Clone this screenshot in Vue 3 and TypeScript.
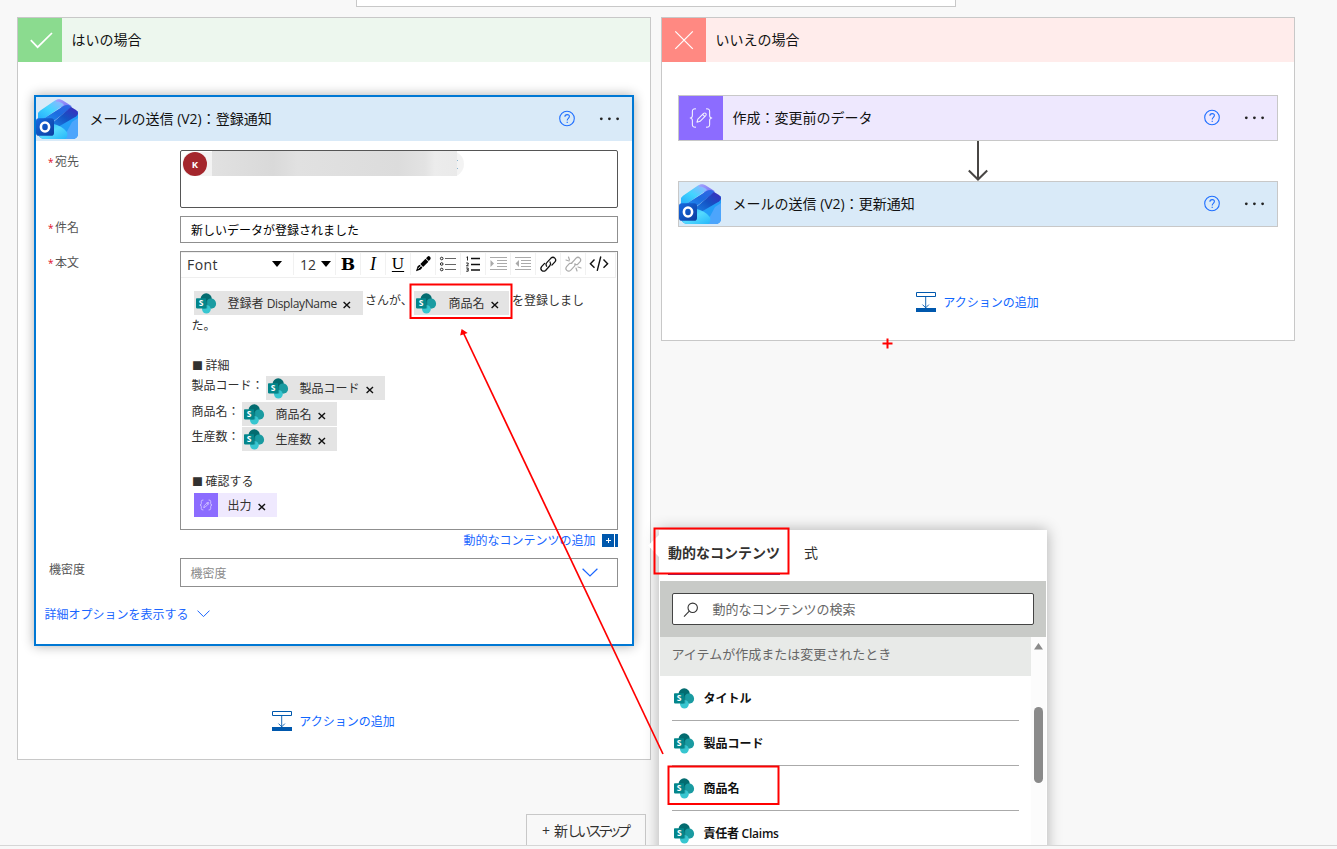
<script setup lang="ts">
import { defineComponent, h } from 'vue'

interface BodyToken { label: string; kind: 'sp' | 'compose' }
interface BodyLine { cls: string; square?: boolean; text?: string; token?: BodyToken }

const bodyLines: BodyLine[] = [
  { cls: 'plain after', text: 'た。' },
  { cls: 'plain', square: true, text: '詳細' },
  { cls: 'row1', text: '製品コード：', token: { label: '製品コード', kind: 'sp' } },
  { cls: 'row2', text: '商品名：', token: { label: '商品名', kind: 'sp' } },
  { cls: 'row3', text: '生産数：', token: { label: '生産数', kind: 'sp' } },
  { cls: 'plain', square: true, text: '確認する' },
  { cls: 'row4', token: { label: '出力', kind: 'compose' } },
]

const dynamicItems: string[] = ['タイトル', '製品コード', '商品名', '責任者 Claims']

const SpIcon = defineComponent({
  render: () => h('svg', { width: 21, height: 21, viewBox: '0 0 21 21' }, [
    h('circle', { cx: 10.2, cy: 5.9, r: 5.6, fill: '#036c70' }),
    h('circle', { cx: 15, cy: 10.7, r: 5.1, fill: '#1a9ba1' }),
    h('circle', { cx: 10.4, cy: 16.2, r: 4.3, fill: '#37c6d0' }),
    h('path', { d: 'M6 15.5h5.2V6H6z', fill: '#025558', opacity: 0.4 }),
    h('rect', { x: 0, y: 5.2, width: 10.2, height: 10.2, rx: 0.8, fill: '#03868b' }),
    h('text', { x: 5.1, y: 13.2, 'text-anchor': 'middle', 'font-size': 8.5, 'font-weight': 700, 'font-family': 'Open Sans, sans-serif', fill: '#fff' }, 'S'),
  ]),
})

const ComposeIcon = defineComponent({
  props: { size: { type: Number, default: 24 } },
  render() {
    return h('svg', { width: this.size, height: this.size, viewBox: '0 0 24 24', fill: 'none', stroke: '#fff', 'stroke-width': 0.6, 'stroke-linecap': 'round', 'stroke-linejoin': 'round', opacity: 0.9 }, [
      h('path', { d: 'M9 7Q7.3 6.9 7.3 8.3v2.3q0 1.3-1.2 1.4 1.2.1 1.2 1.4v2.3q0 1.4 1.7 1.3' }),
      h('path', { d: 'M15 7q1.7-.1 1.7 1.3v2.3q0 1.3 1.2 1.4-1.2.1-1.2 1.4v2.3q0 1.4-1.7 1.3' }),
      h('path', { d: 'M9.8 14.3l.5-1.7 3.1-3.1q.7-.5 1.2 0t0 1.2l-3.1 3.1zM12.9 10l1.2 1.2' }),
    ])
  },
})

const OutlookIcon = defineComponent({
  props: { uid: { type: String, required: true } },
  render() {
    const g = (n: string, a: number[], stops: string[]) =>
      h('linearGradient', { id: this.uid + n, x1: a[0], y1: a[1], x2: a[2], y2: a[3] },
        stops.map((c, i) => h('stop', { offset: i / (stops.length - 1), 'stop-color': c })))
    const f = (n: string) => `url(#${this.uid}${n})`
    return h('svg', { width: 43, height: 43, viewBox: '0 0 43 43' }, [
      h('defs', [
        g('a', [0, 0, 1, 1], ['#38c8ff', '#1795f4', '#5a9cff']),
        g('b', [0, 1, 1, 0], ['#25aefb', '#42d5ff', '#9ab2ff']),
        g('c', [0, 0, 1, 1], ['#a8a4ff', '#6a67f0']),
        g('d', [0, 1, 1, 0], ['#1b82e8', '#1453c4', '#4128bd']),
        g('e', [0, 1, 1, 0], ['#1f8ff0', '#1c6ce0', '#3464e4']),
        g('f', [0, 0, 1, 1], ['#15a6fa', '#55dafe', '#25b7fa']),
        g('g', [0, 0, 1, 1], ['#1769e0', '#0b3d9e']),
      ]),
      h('path', { d: 'M2 15L22 28 42 13V35q0 6-6 6H9q-7 0-7-7z', fill: f('a') }),
      h('path', { d: 'M17 28L42 14V35q0 6-6 6H18z', fill: '#229df7' }),
      h('path', { d: 'M36 24L42 20V35q0 6-6 6H27z', fill: '#64a9ff', opacity: 0.65 }),
      h('path', { d: 'M2 21V17q0-3 2-4.3L19 2.5Q22 .5 25.5 2.2L28 5 7 20.5z', fill: f('b') }),
      h('path', { d: 'M20 2.2q3-2 6.5 0L35.5 8 27 12q-2-4-7.5-4.5z', fill: f('c') }),
      h('path', { d: 'M2 15L19.5 3.5Q25 3 28 7L8 20.5 2 21z', fill: f('b') }),
      h('path', { d: 'M7 21L27.5 8q3.8-2 7.2.2L36 9 16 24.5z', fill: f('e') }),
      h('path', { d: 'M15 26l20-17 5 3q2 1.3 2 3.3t-2 3.2L22 29z', fill: f('d') }),
      h('path', { d: 'M12 25q10 1 16 6t1.5 10H9q-6 0-7-6z', fill: f('f') }),
      h('rect', { x: 0, y: 20.3, width: 18, height: 17.4, rx: 2.8, fill: f('g') }),
      h('ellipse', { cx: 9, cy: 29, rx: 4.1, ry: 4.5, fill: 'none', stroke: '#fff', 'stroke-width': 2.6 }),
    ])
  },
})

const HelpDots = defineComponent({
  render: () => h('svg', { width: 62, height: 18, viewBox: '0 0 62 18' }, [
    h('circle', { cx: 8, cy: 8.5, r: 7.3, fill: 'none', stroke: '#1f6fff', 'stroke-width': 1.1 }),
    h('path', { d: 'M5.9 6.8q0-2.2 2.3-2.2t2.2 2c0 1.7-2.2 1.8-2.2 3.8M8.2 11.7v1.3', fill: 'none', stroke: '#1f6fff', 'stroke-width': 1.1 }),
    ...[42.3, 50.4, 58.6].map(cx => h('circle', { cx, cy: 8.8, r: 1.4, fill: '#222' })),
  ]),
})

const AddIcon = defineComponent({
  render: () => h('svg', { width: 20, height: 20, viewBox: '0 0 20 20', fill: 'none', stroke: '#0058ad' }, [
    h('path', { d: 'M.5.5h19v4H.5z' }),
    h('path', { d: 'M9.7 5v11M6.5 12.6l3.2 3.2 3.2-3.2', 'stroke-width': 0.9 }),
    h('path', { d: 'M0 16h20v4H0z', fill: '#0058ad', stroke: 'none' }),
  ]),
})

const CrossIcon = defineComponent({
  render: () => h('svg', { width: 8, height: 8, viewBox: '0 0 8 8' }, [
    h('path', { d: 'M.6 1.1l6.4 6m0-6l-6.4 6', stroke: '#111', 'stroke-width': 1.4 }),
  ]),
})
</script>

<template>
  <div class="app">
    <div class="parent-box"></div>
    <div class="branches">
      <section class="branch yes">
        <header class="branch-head">
          <div class="branch-icon">
            <svg width="44" height="44" fill="none" stroke="#fff" stroke-width="1.7"><path d="M12.8 22.2l6.8 7L34 15" /></svg>
          </div>
          <span>はいの場合</span>
        </header>

        <article class="card selected">
          <header class="card-head">
            <div class="mail-icon"><OutlookIcon uid="m1" /></div>
            <span class="card-title">メールの送信 (V2)：登録通知</span>
            <HelpDots class="help" />
          </header>
          <div class="form">
            <label class="lab"><i>*</i>宛先</label>
            <div class="to-box">
              <div class="person">
                <span class="avatar">K</span>
                <span class="hidden-name"></span>
                <span class="sliver"></span>
              </div>
            </div>
            <label class="lab"><i>*</i>件名</label>
            <div class="subject">新しいデータが登録されました</div>
            <label class="lab"><i>*</i>本文</label>
            <div class="editor">
              <div class="toolbar">
                <div class="tool font"><span>Font</span><svg width="10" height="6"><path d="M0 0h10L5 6z" /></svg></div>
                <div class="tool size"><span>12</span><svg width="10" height="6"><path d="M0 0h10L5 6z" /></svg></div>
                <div class="tool bold">B</div>
                <div class="tool ital">I</div>
                <div class="tool under">U</div>
                <div class="tool"><svg width="18" height="18"><path d="M2 16.3l1.6-5 2-1.6 2.8 2.8-1.6 2zM6.3 9l5.2-5.2 2.9 2.9-5.3 5.2zM12 3.2l1.7-1.8q1-.8 2.3.3 1.3 1.4.4 2.5L14.8 6z" /><path d="M4 13.8l2.6-2.6" stroke="#fff" stroke-width="1" /></svg></div>
                <div class="tool"><svg width="18" height="18" fill="none" stroke="#222"><circle cx="2.7" cy="3.5" r="1.3" /><circle cx="2.7" cy="9" r="1.3" /><circle cx="2.7" cy="14.5" r="1.3" /><path d="M6 3.5h11M6 9.5h11M6 14.5h11" stroke="#666" /></svg></div>
                <div class="tool"><svg width="18" height="18" fill="none" stroke="#111"><path d="M7 3.5h9M7 9.5h9M7 15h9" stroke-width="1.5" /><path d="M3.5 1.5v4M2.5 2.3h1M2.2 8h2v1.4l-1.8 1.4h2.2M2.2 13h2v3.2h-2m.6-1.6h1" stroke-width=".9" /></svg></div>
                <div class="tool"><svg width="18" height="18" fill="none" stroke="#aaa"><path d="M1 2.5h17M8 5.5h10M8 8.5h10M8 11.5h10M1 14.5h17" /><path d="M1.5 5L5 8.4 1.5 12z" fill="#aaa" stroke="none" /></svg></div>
                <div class="tool"><svg width="18" height="18" fill="none" stroke="#aaa"><path d="M1 2.5h16M7 5.5h10M7 8.5h10M7 11.5h10M1 14.5h16" /><path d="M5 5L1.5 8.4 5 12z" fill="#aaa" stroke="none" /></svg></div>
                <div class="tool"><svg width="18" height="18" fill="none" stroke="#111" stroke-width="1.3" stroke-linecap="round"><path d="M7.6 11.2q-1.3-2.1.2-3.6l4.2-4.5q2-1.7 3.8 0t.1 3.8l-3 3.2" /><path d="M11 7q1.4 2-.2 3.8L6.6 15.4q-2 1.6-3.8 0t-.2-3.8l3-3.2" /></svg></div>
                <div class="tool"><svg width="18" height="18" fill="none" stroke="#aaa" stroke-width="1.2" stroke-linecap="round"><path d="M7.6 8q3-3 4.4-4.9 2-1.7 3.8 0t.1 3.8l-2.6 2.7h-2.5M11 8.5l-.2 2.3L6.6 15.4q-2 1.6-3.8 0t-.2-3.8l3-3.2h2.2M4.5 2l1 3M2 5l3 1M12 13l1 3M14 12l3 1" /></svg></div>
                <div class="tool last"><svg width="20" height="18" fill="none" stroke="#111" stroke-width="1.4"><path d="M5.5 4.5L1.4 8.7l4.1 4M14.5 4.5l4.1 4.2-4.1 4M11.8 1.5L8.2 15.8" /></svg></div>
              </div>
              <div class="content">
                <div class="line first">
                  <span class="token lead"><SpIcon class="sp" /><b>登録者 <span class="latin">DisplayName</span></b><CrossIcon class="x" /></span>
                  <span class="said">さんが、</span>
                  <span class="token marked"><SpIcon class="sp" /><b>商品名</b><CrossIcon class="x" /></span>
                  <span class="tail">を登録しまし</span>
                </div>
                <div v-for="(line, i) in bodyLines" :key="i" class="line" :class="line.cls">
                  <span v-if="line.square" class="square">■</span>
                  <span v-if="line.text" class="txt">{{ line.text }}</span>
                  <span v-if="line.token" class="token" :class="line.token.kind">
                    <SpIcon v-if="line.token.kind === 'sp'" class="sp" />
                    <span v-else class="compose-box"><ComposeIcon :size="24" /></span>
                    <b>{{ line.token.label }}</b><CrossIcon class="x" />
                  </span>
                </div>
              </div>
            </div>
            <div class="dynamic-link">
              <span>動的なコンテンツの追加</span>
              <svg width="16" height="13"><path d="M0 0h12v13H0zM13 0h3v13h-3z" fill="#0058ad" /><path d="M4 6.5h5M6.5 4v5" stroke="#fff" /></svg>
            </div>
            <label class="lab level">機密度</label>
            <div class="select"><span>機密度</span><svg width="16" height="9" fill="none" stroke="#1a66ff" stroke-width="1.2"><path d="M.6.7L8 8 15.4.7" /></svg></div>
          </div>
          <div class="advanced"><span>詳細オプションを表示する</span><svg width="13" height="8" fill="none" stroke="#1a66ff"><path d="M.5.6l6 6 6-6" /></svg></div>
        </article>
        <div class="add-action"><AddIcon /><span>アクションの追加</span></div>
      </section>

      <section class="branch no">
        <header class="branch-head">
          <div class="branch-icon">
            <svg width="44" height="44" fill="none" stroke="#fff" stroke-width="1.2"><path d="M13.3 13.3l17.5 17.5m0-17.5L13.3 30.8" /></svg>
          </div>
          <span>いいえの場合</span>
        </header>
        <article class="card small compose-card">
          <div class="compose-icon"><ComposeIcon :size="44" /></div>
          <span class="card-title">作成：変更前のデータ</span>
          <HelpDots class="help" />
        </article>
        <svg class="arrow" width="22" height="40" fill="none" stroke="#484644" stroke-width="2"><path d="M11 0v38M1.8 29.5l9.2 9 9.2-9" /></svg>
        <article class="card small">
          <div class="mail-icon"><OutlookIcon uid="m2" /></div>
          <span class="card-title">メールの送信 (V2)：更新通知</span>
          <HelpDots class="help" />
        </article>
        <div class="add-action"><AddIcon /><span>アクションの追加</span></div>
      </section>
    </div>

    <button class="new-step"><span>+</span><span class="kanji">新</span><span class="kana">しいステップ</span></button>

    <div class="popup-clip">
      <aside class="popup">
        <svg class="tip" width="11" height="22"><path d="M11 0L0 10.5 11 22z" fill="#fff" /></svg>
        <nav class="tabs"><span class="tab active">動的なコンテンツ</span><span class="tab">式</span></nav>
        <div class="search-area">
          <div class="search">
            <svg width="16" height="16" fill="none" stroke="#333" stroke-width="1.1"><circle cx="9.7" cy="6.8" r="4.7" /><path d="M6.3 10.2L1 15.6" /></svg>
            <span>動的なコンテンツの検索</span>
          </div>
        </div>
        <div class="list-wrap">
          <div class="list">
            <div class="group">アイテムが作成または変更されたとき</div>
            <div v-for="item in dynamicItems" :key="item" class="item"><SpIcon /><span>{{ item }}</span></div>
          </div>
          <div class="scroll">
            <svg width="9" height="7"><path d="M4.5 0L9 6.5H0z" fill="#8a8a8a" /></svg>
            <div class="thumb"></div>
          </div>
        </div>
      </aside>
    </div>
    <div class="bottom-line"></div>

    <svg class="marks" width="1337" height="849" fill="none" stroke="#f00" stroke-width="2">
      <rect x="410.5" y="284.5" width="101" height="33.5" />
      <rect x="654.5" y="528.5" width="134" height="45" />
      <rect x="668.5" y="766.5" width="110" height="37.5" />
      <path d="M663 754L463 332" stroke-width="1.7" />
      <path d="M461 334.5L462 330l4.3 2.8z" fill="#f00" stroke-width="1.2" />
      <path d="M882.5 343.5h10M887.5 338.5v10" />
    </svg>
  </div>
</template>

<style>
html, body { margin: 0; background: #f8f8f8; overflow: hidden; }
</style>

<style scoped>
.app { position: relative; width: 1337px; height: 849px; overflow: hidden; background: #f8f8f8; font-family: "Open Sans", "Noto Sans CJK JP", sans-serif; font-size: 12px; color: #323130; }
.app * { box-sizing: border-box; }
svg { display: block; flex: none; }
span, label { white-space: nowrap; }
.parent-box { width: 600px; height: 7px; margin-left: 356px; background: #fff; border: 1px solid #c8c8c8; border-top: 0; }
.branches { display: flex; align-items: flex-start; gap: 10px; padding: 10px 0 0 17px; }
.branch { width: 634px; height: 743px; background: #fff; border: 1px solid #c8c8c8; display: flex; flex-direction: column; align-items: center; }
.branch.no { height: 324px; }
.branch-head { display: flex; width: 100%; height: 44px; flex: none; align-items: center; gap: 9.5px; background: #edf7ee; color: #111; font-size: 14px; line-height: 20px; margin-bottom: 33px; }
.no .branch-head { background: #ffeceb; }
.branch-icon { width: 44px; height: 44px; background: #8bdb8f; }
.no .branch-icon { background: #ff8982; }
.card { width: 600px; flex: none; background: #fff; }
.selected { height: 551px; border: 2px solid #0078d4; box-shadow: 0 0 11px rgba(0, 0, 0, .32); }
.card-head { display: flex; align-items: center; height: 44px; background: #d9eaf8; }
.mail-icon { width: 44px; height: 44px; padding-top: 1px; }
.card-title { margin-left: 9.5px; color: #111; font-size: 14px; line-height: 20px; flex: 1; }
.help { margin-right: 11px; }
.small { display: flex; align-items: center; height: 46px; border: 1px solid #c8c8c8; background: #d9eaf8; }
.compose-card { background: #eee8fe; }
.compose-icon { width: 44px; height: 44px; background: #8c6cff; }
.form { display: grid; grid-template-columns: 132px 438px; grid-template-rows: 58px 27px 279px 12px 29px; row-gap: 8px; padding: 9px 0 0 12px; align-items: start; }
.lab { height: 24px; line-height: 24px; color: #555; }
.lab.level { padding-left: 1px; }
.lab i { color: #e00b1c; font-style: normal; font-size: 10px; display: inline-block; width: 7px; }
.to-box { height: 58px; border: 1px solid #555; border-radius: 2px; padding: 0 0 0 1px; }
.person { display: flex; align-items: center; width: 282px; height: 26px; background: linear-gradient(#f3f3f3, #f3f3f3) 0 1px / 100% 24px no-repeat; border-radius: 13px; }
.avatar { width: 24px; height: 24px; margin-left: 1px; border-radius: 50%; background: #a4262c; color: #fff; font-size: 9.5px; font-weight: 700; line-height: 25px; text-align: center; }
.hidden-name { width: 245px; height: 25px; align-self: flex-start; margin-left: 5px; background: linear-gradient(90deg, #e1e1e1, #d9d9d9 25%, #e1e1e1 35%, #dcdcdc 76%, #e3e3e3 87%, #ececec 91%, #eaeaea); }
.sliver { width: 1px; height: 9px; border-top: 1.5px solid #8bb4cf; border-bottom: 1.5px solid #8bb4cf; }
.subject { height: 27px; border: 1px solid #8f8f8f; padding-left: 10px; line-height: 27px; color: #000; }
.editor { height: 279px; border: 1px solid #8f8f8f; }
.toolbar { display: flex; height: 26px; border: 1px solid #efefef; border-width: 1px 1px 1px 0; margin-right: 1px; }
.tool { display: flex; align-items: center; justify-content: center; width: 25px; height: 22px; border: 1px solid #f1f1f1; border-width: 0 1px 0 0; flex: none; color: #000; }
.tool.last { border: 0; }
.tool.font { width: 113px; justify-content: flex-start; padding-left: 6px; font-size: 14px; letter-spacing: .4px; color: #333; }
.tool.font span { width: 85px; }
.tool.size { width: 42px; justify-content: flex-start; padding-left: 6px; font-size: 14px; gap: 5px; color: #333; }
.bold, .ital, .under { font-family: "DejaVu Serif", serif; font-size: 17px; line-height: 22px; }
.bold { font-weight: 700; }
.ital { font-family: "Liberation Serif", serif; font-style: italic; font-size: 18px; }
.under { font-family: "Liberation Serif", serif; text-decoration: underline; text-underline-offset: 2px; }
.content { padding: 13px 0 0 11px; line-height: 20px; }
.line { display: flex; }
.first { height: 24px; }
.lead { margin-left: 2px; width: 169px; }
.latin { letter-spacing: -.35px; }
.said { width: 49px; margin-left: 2px; }
.tail { margin-left: 3px; }
.plain { height: 20px; padding-top: 1px; }
.after { margin-bottom: 20px; }
.square { width: 13.5px; font-size: 11px; }
.row1 { height: 24px; margin-top: 1px; }
.row2 { height: 24px; margin-top: 2px; }
.row3 { height: 24px; margin: 1px 0 20px; }
.row4 { height: 24px; margin: 2px 0 0 2px; }
.txt { margin-left: -.5px; }
.square + .txt { margin-left: 0; }
.txt + .token { margin-left: 2.5px; }
.token { display: flex; align-items: center; height: 24px; padding-right: 11px; background: #e4e4e4; }
.token .sp { margin: 0 10.5px 0 2px; }
.token b { font-weight: 400; padding-top: 1px; }
.token .x { margin: 4px 0 0 6.5px; }
.token.marked { padding-right: 10px; }
.token.marked .sp { margin-right: 11.5px; }
.token.compose { background: #efe9fe; }
.compose-box { width: 24px; height: 24px; margin-right: 9.5px; background: #8c6cff; }
.dynamic-link { grid-column: 2; display: flex; justify-content: flex-end; align-items: center; gap: 6.5px; height: 20px; margin-top: -8px; color: #1a66ff; }
.select { display: flex; align-items: center; justify-content: space-between; height: 29px; padding: 0 19px 0 9.5px; border: 1px solid #8f8f8f; color: #8a8a8a; }
.advanced { display: flex; align-items: center; gap: 8.5px; height: 20px; margin: 17px 0 0 8.5px; color: #1a66ff; }
.add-action { display: flex; align-items: center; gap: 7px; height: 20px; margin-top: 65px; padding-right: 1px; color: #0f66ff; line-height: 20px; }
.add-action span { padding-top: 2px; }
.new-step { display: flex; align-items: center; width: 120px; height: 32px; margin: 54px 0 0 526px; padding: 0 0 0 15px; border: 1px solid #c8c8c8; border-bottom: 0; background: #f8f8f8; font: inherit; font-size: 14px; color: #323130; }
.new-step .kanji { margin-left: 4px; }
.new-step .kanji, .kana { padding-bottom: 2px; }
.kana { font-feature-settings: "palt"; letter-spacing: -2.3px; }
.popup-clip { position: absolute; left: 640px; top: 515px; width: 430px; height: 330px; overflow: hidden; padding: 15px 0 0 19px; }
.popup { position: relative; width: 388px; height: 335px; background: #fff; box-shadow: 0 0 14px rgba(0, 0, 0, .3); }
.tip { position: absolute; left: -11px; top: 5px; }
.tabs { display: flex; gap: 24px; height: 51px; padding-left: 9px; font-size: 14px; line-height: 45px; }
.tab { height: 45px; }
.tab.active { font-weight: 700; border-bottom: 2px solid #5c2d91; width: 112px; }
.search-area { margin: 0 1px; height: 56px; padding: 12px 12px; background: #c8cac7; }
.search { display: flex; align-items: center; width: 362px; height: 32px; padding-left: 10px; border: 1px solid #444; border-radius: 2px; background: #fff; gap: 13.5px; font-size: 13px; line-height: 20px; color: #666; }
.list-wrap { display: flex; margin: 0 1px; height: 230px; }
.list { width: 371px; }
.group { height: 39px; padding-left: 11.5px; background: #e8eae8; font-size: 13px; line-height: 35px; color: #666; }
.item { display: flex; align-items: center; gap: 9px; height: 45px; margin: 0 12px; padding-left: 1.5px; border-bottom: 1px solid #aaa; font-weight: 700; color: #111; }
.item:last-child { font-weight: 600; letter-spacing: -.25px; }
.scroll { flex: 1; background: #fcfcfc; padding: 6px 0 0 3px; }
.thumb { width: 9px; height: 76px; margin-top: 57px; border-radius: 5px; background: #8a8a8a; }
.bottom-line { position: absolute; left: 0; top: 845px; width: 1337px; height: 4px; border-top: 1px solid #d6d6d6; background: #f8f8f8; }
.marks { position: absolute; left: 0; top: 0; pointer-events: none; }
</style>
